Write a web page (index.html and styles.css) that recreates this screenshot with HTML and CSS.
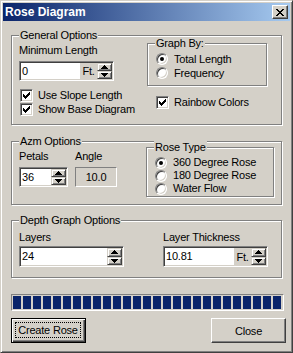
FILE: index.html
```html
<!DOCTYPE html>
<html>
<head>
  <title>Rose Diagram</title>
  <link rel="stylesheet" href="styles.css">
</head>
<body>

  <div class="window">
    <div class="titlebar">
      <span class="title">Rose Diagram</span>
      <span class="close-x">
        <svg width="8" height="7" viewBox="0 0 8 7" shape-rendering="crispEdges"><path d="M0 0h2v1H0z M6 0h2v1H6z M1 1h2v1H1z M5 1h2v1H5z M2 2h4v1H2z M3 3h2v1H3z M2 4h4v1H2z M1 5h2v1H1z M5 5h2v1H5z M0 6h2v1H0z M6 6h2v1H6z" fill="#000"/></svg>
      </span>
    </div>

    <div class="client">

      <div class="group general">
        <div class="group-title">General Options</div>
        <div class="group-body">
          <div class="col-left">
            <div class="label first">Minimum Length</div>
            <div class="field field-min">
              <span class="field-text">0</span>
              <span class="unit">Ft.</span>
              <span class="spin">
                <span class="spin-btn"><svg width="7" height="4" viewBox="0 0 7 4" shape-rendering="crispEdges"><path d="M3 0h1v1h1v1h1v1h1v1H0V3h1V2h1V1h1z" fill="#000"/></svg></span>
                <span class="spin-btn"><svg width="7" height="4" viewBox="0 0 7 4" shape-rendering="crispEdges"><path d="M0 0h7v1H6v1H5v1H4v1H3V3H2V2H1V1H0z" fill="#000"/></svg></span>
              </span>
            </div>
            <div class="check-row slope"><span class="checkbox"><svg width="9" height="9" viewBox="0 0 9 9" shape-rendering="crispEdges"><path d="M1 3h1v3H1z M2 4h1v3H2z M3 5h1v3H3z M4 4h1v3H4z M5 3h1v3H5z M6 2h1v3H6z M7 1h1v3H7z" fill="#000"/></svg></span>Use Slope Length</div>
            <div class="check-row"><span class="checkbox"><svg width="9" height="9" viewBox="0 0 9 9" shape-rendering="crispEdges"><path d="M1 3h1v3H1z M2 4h1v3H2z M3 5h1v3H3z M4 4h1v3H4z M5 3h1v3H5z M6 2h1v3H6z M7 1h1v3H7z" fill="#000"/></svg></span>Show Base Diagram</div>
          </div>
          <div class="col-right">
            <div class="group graph-by">
              <div class="group-title">Graph By:</div>
              <div class="radio-row first"><span class="radio on"></span>Total Length</div>
              <div class="radio-row"><span class="radio"></span>Frequency</div>
            </div>
            <div class="check-row rainbow"><span class="checkbox"><svg width="9" height="9" viewBox="0 0 9 9" shape-rendering="crispEdges"><path d="M1 3h1v3H1z M2 4h1v3H2z M3 5h1v3H3z M4 4h1v3H4z M5 3h1v3H5z M6 2h1v3H6z M7 1h1v3H7z" fill="#000"/></svg></span>Rainbow Colors</div>
          </div>
        </div>
      </div>

      <div class="group azm">
        <div class="group-title">Azm Options</div>
        <div class="group-body">
          <div class="col-left azm-grid">
            <div class="label">Petals</div>
            <div class="label">Angle</div>
            <div class="field field-petals">
              <span class="field-text">36</span>
              <span class="spin">
                <span class="spin-btn"><svg width="7" height="4" viewBox="0 0 7 4" shape-rendering="crispEdges"><path d="M3 0h1v1h1v1h1v1h1v1H0V3h1V2h1V1h1z" fill="#000"/></svg></span>
                <span class="spin-btn"><svg width="7" height="4" viewBox="0 0 7 4" shape-rendering="crispEdges"><path d="M0 0h7v1H6v1H5v1H4v1H3V3H2V2H1V1H0z" fill="#000"/></svg></span>
              </span>
            </div>
            <div class="static-box">10.0</div>
          </div>
          <div class="col-right">
            <div class="group rose-type">
              <div class="group-title">Rose Type</div>
              <div class="radio-row first"><span class="radio on"></span>360 Degree Rose</div>
              <div class="radio-row"><span class="radio"></span>180 Degree Rose</div>
              <div class="radio-row"><span class="radio"></span>Water Flow</div>
            </div>
          </div>
        </div>
      </div>

      <div class="group depth">
        <div class="group-title">Depth Graph Options</div>
        <div class="group-body">
          <div class="col-depth">
            <div class="label">Layers</div>
            <div class="field field-wide">
              <span class="field-text">24</span>
              <span class="spin">
                <span class="spin-btn"><svg width="7" height="4" viewBox="0 0 7 4" shape-rendering="crispEdges"><path d="M3 0h1v1h1v1h1v1h1v1H0V3h1V2h1V1h1z" fill="#000"/></svg></span>
                <span class="spin-btn"><svg width="7" height="4" viewBox="0 0 7 4" shape-rendering="crispEdges"><path d="M0 0h7v1H6v1H5v1H4v1H3V3H2V2H1V1H0z" fill="#000"/></svg></span>
              </span>
            </div>
          </div>
          <div>
            <div class="label">Layer Thickness</div>
            <div class="field field-wide">
              <span class="field-text">10.81</span>
              <span class="unit">Ft.</span>
              <span class="spin">
                <span class="spin-btn"><svg width="7" height="4" viewBox="0 0 7 4" shape-rendering="crispEdges"><path d="M3 0h1v1h1v1h1v1h1v1H0V3h1V2h1V1h1z" fill="#000"/></svg></span>
                <span class="spin-btn"><svg width="7" height="4" viewBox="0 0 7 4" shape-rendering="crispEdges"><path d="M0 0h7v1H6v1H5v1H4v1H3V3H2V2H1V1H0z" fill="#000"/></svg></span>
              </span>
            </div>
          </div>
        </div>
      </div>

      <div class="progress"><div class="progress-fill"></div></div>

      <div class="buttons">
        <button class="btn default"><span class="focus">Create Rose</span></button>
        <button class="btn">Close</button>
      </div>

    </div>
  </div>

</body>
</html>
```

FILE: styles.css
```css
body { margin: 0; background: #D4D0C8; }

.window {
  width: 293px; height: 353px; box-sizing: border-box; padding: 2px;
  background: #D4D0C8;
  border: 1px solid; border-color: #D4D0C8 #404040 #404040 #D4D0C8;
  box-shadow: inset 1px 1px #fff, inset -1px -1px #808080;
  font-family: "Liberation Sans", Arial, sans-serif; font-size: 11px; color: #000;
  letter-spacing: -0.2px;
}

.titlebar {
  height: 18px; display: flex; align-items: center; padding: 0 2px;
  background: linear-gradient(to right, #0A246A, #A6CAF0);
}
.title { flex: 1; color: #fff; font-weight: bold; font-size: 12px; line-height: 18px; letter-spacing: 0; }
.close-x {
  width: 16px; height: 14px; box-sizing: border-box; display: flex; align-items: center; justify-content: center;
  background: #D4D0C8; border: 1px solid; border-color: #fff #404040 #404040 #fff;
  box-shadow: inset -1px -1px #808080;
}

.client { padding-left: 8px; }

/* etched group boxes */
.group {
  box-sizing: border-box; border: 1px solid #808080;
  box-shadow: inset 1px 1px #fff, 1px 1px #fff;
  padding: 0 7px;
}
.group-title {
  margin-top: -7px; width: fit-content; padding: 0 1px;
  background: #D4D0C8; line-height: 13px;
}
.group-body { display: flex; }

.general { width: 271px; margin-top: 14px; padding-bottom: 8px; }
.azm { width: 271px; margin-top: 16px; padding-bottom: 7px; }
.depth { width: 271px; margin-top: 15px; padding-bottom: 10px; }

.col-left { width: 128px; }
.col-depth { width: 144px; }

.label { line-height: 13px; }
.label.first { margin-top: 2px; }
.depth .label { margin-top: 4px; }

/* sunken edit fields */
.field {
  display: flex; box-sizing: border-box; height: 20px; background: #fff;
  border: 1px solid; border-color: #808080 #fff #fff #808080;
  box-shadow: inset 1px 1px #404040, inset -1px -1px #D4D0C8;
  padding: 1px;
}
.field-min { width: 95px; margin-top: 4px; }
.field-petals { width: 49px; }
.field-wide { width: 105px; height: 21px; margin-top: 2px; }
.field-text { flex: 1; padding-left: 1px; line-height: 16px; }
.field-wide .field-text { line-height: 17px; }
.unit { width: 17px; background: #D4D0C8; text-align: center; display: flex; align-items: center; justify-content: center; }
.spin { width: 15px; display: flex; flex-direction: column; }
.spin-btn {
  flex: 1; box-sizing: border-box; display: flex; align-items: center; justify-content: center;
  background: #D4D0C8; border: 1px solid; border-color: #D4D0C8 #404040 #404040 #D4D0C8;
  box-shadow: inset 1px 1px #fff, inset -1px -1px #808080;
}

.check-row { display: flex; align-items: center; height: 14px; line-height: 13px; margin-left: 1px; }
.check-row.slope { margin-top: 7px; }
.check-row.rainbow { margin-top: 9px; margin-left: 9px; }
.checkbox {
  width: 13px; height: 13px; box-sizing: border-box; margin-right: 5px;
  display: flex; align-items: center; justify-content: center; background: #fff;
  border: 1px solid; border-color: #808080 #fff #fff #808080;
  box-shadow: inset 1px 1px #404040, inset -1px -1px #D4D0C8;
}

.graph-by { width: 120px; margin-top: 1px; padding-bottom: 5px; }
.rose-type { width: 128px; margin-top: -1px; padding-bottom: 1px; }

.radio-row { display: flex; align-items: center; height: 14px; line-height: 13px; margin-left: 1px; }
.radio-row.first { margin-top: 2px; }
.rose-type .radio-row { height: 13px; }
.radio {
  width: 12px; height: 12px; box-sizing: border-box; border-radius: 50%; margin-right: 6px;
  display: flex; align-items: center; justify-content: center; background: #fff;
  border: 1px solid; border-color: #808080 #fff #fff #808080;
  box-shadow: inset 1px 1px #404040, inset -1px -1px #D4D0C8;
}
.radio.on::after { content: ""; width: 4px; height: 4px; border-radius: 50%; background: #000; }

.azm-grid {
  display: grid; grid-template-columns: 49px 42px; column-gap: 7px; row-gap: 4px;
  align-content: start; padding-top: 2px;
}
.static-box {
  height: 20px; box-sizing: border-box; display: flex; align-items: center; justify-content: center;
  border: 1px solid; border-color: #808080 #fff #fff #808080;
}

.progress {
  width: 273px; height: 17px; box-sizing: border-box; margin-top: 16px; padding: 1px;
  border: 1px solid; border-color: #808080 #fff #fff #808080;
}
.progress-fill {
  width: 268px; height: 13px;
  background: repeating-linear-gradient(to right, #0A246A 0 8px, transparent 8px 10px);
}

.buttons { display: flex; justify-content: space-between; width: 275px; margin-top: 7px; }
.btn {
  width: 75px; height: 25px; box-sizing: border-box; padding: 0; margin: 0;
  font-family: inherit; font-size: 11px; letter-spacing: -0.2px; color: #000; background: #D4D0C8;
  border: 1px solid; border-color: #fff #404040 #404040 #fff;
  box-shadow: inset -1px -1px #808080;
}
.btn.default {
  display: flex; padding: 3px 4px 4px 3px;
  border-color: #000;
  box-shadow: inset 1px 1px #fff, inset -1px -1px #404040, inset -2px -2px #808080;
}
.focus { flex: 1; display: flex; align-items: center; justify-content: center; border: 1px dotted #000; }
```
